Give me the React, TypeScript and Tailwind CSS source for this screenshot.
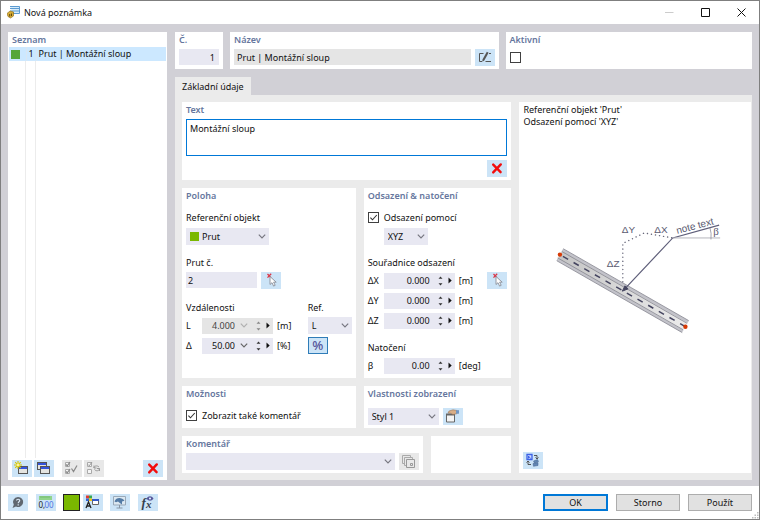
import { useState } from 'react'
import type { ReactNode } from 'react'
import clsx from 'clsx'

interface SelectProps {
  id: string
  label: string
  options: string[]
  className?: string
  swatch?: boolean
}

interface NumberFieldProps {
  id: string
  label: string
  value: string
  unit: string
  disabled?: boolean
  dropdown?: boolean
}

function Section({ title, className, children }: { title?: string; className?: string; children?: ReactNode }) {
  return (
    <section className={clsx('bg-white px-1 pb-[3px]', className)}>
      {title && <h2 className="h-[15px] leading-[15px] font-semibold text-[#65769d]">{title}</h2>}
      {children}
    </section>
  )
}

function Chevron({ className }: { className?: string }) {
  return (
    <svg viewBox="0 0 8 5" className={clsx('pointer-events-none h-[5px] w-2 shrink-0', className)} fill="none" stroke="currentColor" strokeWidth="1.2">
      <path d="M.8.7 4 3.9 7.2.7" />
    </svg>
  )
}

function Select({ id, label, options, className, swatch }: SelectProps) {
  return (
    <div className={clsx('relative flex h-[17px] items-center bg-[#e8e8f2]', className)}>
      {swatch && <span className="pointer-events-none absolute left-1 size-[9px] bg-[#7ab800]" />}
      <select
        id={id}
        aria-label={label}
        className={clsx('h-full w-full appearance-none bg-transparent pr-4 leading-[17px] outline-none', swatch ? 'pl-4' : 'pl-1')}
      >
        {options.map((o) => (
          <option key={o}>{o}</option>
        ))}
      </select>
      <Chevron className="absolute right-[3px] text-[#777780]" />
    </div>
  )
}

function Checkbox({ label, hideLabel, defaultChecked }: { label: string; hideLabel?: boolean; defaultChecked?: boolean }) {
  return (
    <label className="flex items-center gap-[5px] leading-[15px]">
      <span className="relative flex size-[11px] shrink-0">
        <input
          type="checkbox"
          aria-label={label}
          defaultChecked={defaultChecked}
          className="peer size-[11px] appearance-none border border-[#404040] bg-white"
        />
        <svg viewBox="0 0 11 11" className="pointer-events-none absolute inset-0 hidden peer-checked:block" fill="none" stroke="#333" strokeWidth="1.1">
          <path d="M2.4 5.6 4.5 7.8 8.8 3" />
        </svg>
      </span>
      {!hideLabel && label}
    </label>
  )
}

function NumberField({ id, label, value, unit, disabled, dropdown }: NumberFieldProps) {
  return (
    <div className="flex h-[17px] items-center">
      <label htmlFor={id} className="w-4 shrink-0">
        {label}
      </label>
      <div className={clsx('flex h-4 w-[71px] shrink-0 items-center', disabled ? 'bg-[#e5e5e5] text-[#444]' : 'bg-[#e8e8f2]')}>
        <input
          id={id}
          defaultValue={value}
          disabled={disabled}
          className={clsx('h-full min-w-0 flex-1 bg-transparent text-right outline-none', dropdown ? 'pr-[5px]' : 'pr-2')}
        />
        {dropdown && <Chevron className={clsx('mr-2', disabled ? 'text-[#b0b0b0]' : 'text-[#666]')} />}
        <button type="button" aria-label="▲▼" disabled={disabled} className="flex">
          <svg viewBox="0 0 5 10" className={clsx('h-[10px] w-[5px]', disabled ? 'text-[#888]' : 'text-[#333]')} fill="currentColor">
            <path d="M.5 2.800 2.500.6 4.500 2.800zM.5 7.200 2.500 9.400 4.500 7.200z" />
          </svg>
        </button>
        <button type="button" aria-label="▶" className="mr-[3px] ml-[5px] flex">
          <svg viewBox="0 0 4 7" className="h-[7px] w-1" fill="#111">
            <path d="M.5.5 3.700 3.500.5 6.500z" />
          </svg>
        </button>
      </div>
      <span className="ml-1">{unit}</span>
    </div>
  )
}

function IconButton({ label, disabled, className, children }: { label: string; disabled?: boolean; className?: string; children: ReactNode }) {
  return (
    <button
      type="button"
      aria-label={label}
      disabled={disabled}
      className={clsx('flex h-[17px] w-5 shrink-0 items-center justify-center', disabled ? 'bg-[#e8e8e8]' : 'bg-[#cce4f7]', className)}
    >
      <svg viewBox="0 0 20 17" className="h-[17px] w-5" fill="none">
        {children}
      </svg>
    </button>
  )
}

function DeleteIcon() {
  return <path d="M6.2 4.6 13.6 12.2M13.8 4.4 6.2 12.4" stroke="#f20d0d" strokeWidth="2.4" strokeLinecap="round" />
}

function WindowIcon({ x, y }: { x: number; y: number }) {
  return (
    <g>
      <rect x={x + 0.5} y={y + 0.5} width="9" height="7" fill="#e4e4e0" stroke="#555" />
      <rect x={x + 1} y={y + 1} width="8" height="2" fill="#3355dd" />
    </g>
  )
}

function PickIcon() {
  return (
    <>
      <path d="M6.500 2 10 5.600M10.200 1.800 6.500 5.600" stroke="#dc3545" strokeWidth="1.3" />
      <path d="M9 4.500v8l2-1.800 1.600 3.400 1.600-.8-1.600-3.100h2.600z" fill="#fff" stroke="#8a8f98" strokeWidth=".9" />
    </>
  )
}

function Diagram() {
  return (
    <svg viewBox="519 209 232 160" className="w-full max-w-[232px]" fill="none">
      <defs>
        <linearGradient id="beam" x1="0" x2="1">
          <stop offset="0" stopColor="#c4c4c4" />
          <stop offset="1" stopColor="#ececec" />
        </linearGradient>
      </defs>
      <path d="M562.5 249 688 321 682.5 331 557 259z" fill="url(#beam)" />
      <path d="M562.5 249 688.5 321M557.3 258.5 683 330.5" stroke="#c3c3ca" strokeWidth="2.6" />
      <path d="M563.3 247.8 689 319.8M562 250.6 687.5 322.6M557.8 257 683.5 329M556.8 259.8 682.5 331.8" stroke="#85858f" strokeWidth=".8" />
      <path d="M563 255.5 686 326" stroke="#454560" strokeWidth="1.5" strokeDasharray="6 6.3" />
      <circle cx="560" cy="253.7" r="2.2" fill="#d63a06" />
      <circle cx="685.7" cy="326" r="2.2" fill="#d63a06" />
      <path d="M623 281V242.5L644.5 232 673 237" stroke="#67677a" strokeWidth="1.4" strokeLinecap="round" strokeDasharray=".1 4" />
      <path d="M624.5 288.5 673 237 719.5 224.2" stroke="#5f5f7a" strokeWidth="1.2" />
      <path d="M622.5 290.3 625.2 285 628.2 288z" fill="#454560" stroke="#454560" />
      <path d="M673 237H720.5" stroke="#b5b5bc" />
      <path d="M710.3 227Q712 232 711.3 238.5" stroke="#8f8f9c" strokeWidth=".8" />
      <g fill="#5b5b72" fontFamily="Liberation Sans, sans-serif" fontSize="10">
        <text x="622" y="232">ΔY</text>
        <text x="654.5" y="232">ΔX</text>
        <text x="607" y="266.5">ΔZ</text>
        <text transform="translate(677.5 233) rotate(-14.500)" fontSize="10">note text</text>
        <text x="713.5" y="234.500" fontFamily="Liberation Serif, serif" fontSize="11">β</text>
      </g>
    </svg>
  )
}

export default function App() {
  const [name, setName] = useState('Prut | Montážní sloup')
  const [text, setText] = useState('Montážní sloup')

  return (
    <div className="flex min-h-screen flex-col border border-[#7f7f7f] bg-white font-['Noto_Sans','Open_Sans',sans-serif] text-[9px] leading-[15px] text-[#111]">
      <header className="flex h-[23px] items-center pl-[6px]">
        <svg viewBox="0 0 13 13" className="size-[13px]" fill="none">
          <path d="M3 .5h9.500v7H6" fill="#d7ecfb" stroke="#5c9bd1" />
          <path d="M3 2.500h9M3 5h9" stroke="#5c9bd1" strokeWidth="1.2" />
          <path d="M0 7.500 3 5l3.500 1v4L3.500 12 1 10.500z" fill="#d8ad35" stroke="#876414" strokeWidth=".6" />
          <path d="M2.700 8v2.500M4.500 7.500V10" stroke="#60480f" />
        </svg>
        <h1 className="ml-1">Nová poznámka</h1>
        <div className="ml-auto flex">
          <button type="button" aria-label="Minimize" disabled className="flex h-[22px] w-9 items-center justify-center">
            <svg viewBox="0 0 9 9" className="size-[9px]"><path d="M0 4.500h8.500" stroke="#ccc" /></svg>
          </button>
          <button type="button" aria-label="Maximize" className="flex h-[22px] w-9 items-center justify-center">
            <svg viewBox="0 0 9 9" className="size-[9px]" fill="none"><path d="M.5.500h8v8h-8z" stroke="#111" /></svg>
          </button>
          <button type="button" aria-label="Close" className="flex h-[22px] w-9 items-center justify-center">
            <svg viewBox="0 0 9 9" className="size-[9px]"><path d="M.5.500 8.500 8.500M8.500.500.500 8.500" stroke="#111" /></svg>
          </button>
        </div>
      </header>

      <main className="flex flex-1 gap-2 bg-[#d1d0d6] px-[7px] pt-2 pb-[6px]">
        <aside className="flex w-[159px] shrink-0 flex-col bg-white">
          <h2 className="h-[15px] pl-1 leading-[15px] font-semibold text-[#65769d]">Seznam</h2>
          <table className="mx-px table-fixed">
            <tbody>
              <tr className="h-[14px] bg-[#cce8ff] leading-[14px]">
                <td className="w-[17px] border-r border-[#d9e6f2] p-0 pl-[2px]">
                  <span className="block size-[9px] bg-[#55a63a]" />
                </td>
                <td className="w-[10px] border-r border-[#d9e6f2] p-0 text-center">1</td>
                <td className="p-0 pl-[2px]">Prut | Montážní sloup</td>
              </tr>
            </tbody>
          </table>
          <div className="mx-px flex flex-1">
            <div className="w-[17px] border-r border-[#ececec]" />
            <div className="w-[10px] border-r border-[#ececec]" />
          </div>
          <div className="flex items-center gap-[2px] px-1 pt-[2px] pb-[3px]">
            <IconButton label="Nová">
              <WindowIcon x={6} y={6} />
              <path d="M6 1v8M2 5h8M3.200 2.200l5.600 5.600M8.800 2.200 3.200 7.800" stroke="#d6c500" strokeWidth="1.100" />
              <circle cx="6" cy="5" r="1.400" fill="#fff59a" />
            </IconButton>
            <IconButton label="Kopírovat">
              <WindowIcon x={3} y={2} />
              <WindowIcon x={6} y={6} />
            </IconButton>
            <IconButton label="Vybrat vše" disabled className="ml-[6px]">
              <path d="M3.500 2.500h4v4h-4zM3.500 9.500h4v4h-4z" stroke="#aaa" fill="#f5f5f5" />
              <path d="m4 4.500 1.300 1.300L8 2M4 11.500l1.300 1.300L8 9M9.500 8.500l2 3L15 5.500" stroke="#888" strokeWidth="1.200" />
            </IconButton>
            <IconButton label="Obrátit výběr" disabled>
              <path d="M3.500 2.500h4v4h-4zM3.500 9.500h4v4h-4z" stroke="#aaa" fill="#f5f5f5" />
              <path d="m4 4.500 1.300 1.300L8 2M10 8c0-2 3-3 5-1M15.500 8.500c0 2.500-3.500 3-5 1M10 5.500V8h2.500M15.500 11V8.500H13" stroke="#999" />
            </IconButton>
            <IconButton label="Smazat" className="ml-auto">
              <DeleteIcon />
            </IconButton>
          </div>
        </aside>

        <div className="flex min-w-0 flex-1 flex-col">
          <div className="grid grid-cols-[48px_268fr_246fr] gap-x-[7px]">
            <Section title="Č.">
              <input aria-label="Č." defaultValue="1" className="mt-[2px] block h-4 w-full bg-[#e8e8f2] pr-1 text-right outline-none" />
            </Section>
            <Section title="Název">
              <div className="mt-[2px] flex gap-1">
                <input
                  aria-label="Název"
                  value={name}
                  onChange={(e) => setName(e.target.value)}
                  className="h-4 min-w-0 flex-1 bg-[#e5e5e5] px-[3px] outline-none"
                />
                <IconButton label="Upravit název">
                  <path d="M8.500 4.500h-4v8H7M14 4.500h2M10.500 12.500h5.500" stroke="#555" />
                  <path d="m7.500 10.500 4.300-7.700 1.800 1-4.300 7.700-2 1.200z" fill="#555" />
                </IconButton>
              </div>
            </Section>
            <Section title="Aktivní">
              <div className="mt-[5px]">
                <Checkbox label="Aktivní" hideLabel />
              </div>
            </Section>
          </div>

          <div className="mt-2 flex" role="tablist">
            <button type="button" role="tab" aria-selected="true" className="h-[18px] bg-[#ebebeb] px-[7px]">
              Základní údaje
            </button>
          </div>

          <div className="grid flex-1 grid-cols-[330fr_232fr] gap-2 bg-[#ebebeb] py-[7px] pr-px pl-[7px]">
            <div className="flex min-w-0 flex-col gap-2">
              <Section title="Text">
                <textarea
                  aria-label="Text"
                  value={text}
                  onChange={(e) => setText(e.target.value)}
                  className="mt-[2px] block h-[37px] w-full resize-none border border-[#0078d7] px-[3px] leading-[17px] outline-none"
                />
                <div className="mt-1 flex justify-end">
                  <IconButton label="Smazat text">
                    <DeleteIcon />
                  </IconButton>
                </div>
              </Section>

              <div className="grid flex-1 grid-cols-[174fr_148fr] gap-2">
                <Section title="Poloha">
                  <label htmlFor="object" className="mt-[7px] mb-[3px] block">Referenční objekt</label>
                  <Select id="object" label="Referenční objekt" options={['Prut']} swatch className="w-[83px]" />
                  <label htmlFor="member" className="mt-[10px] mb-[2px] block">Prut č.</label>
                  <div className="flex gap-1">
                    <input id="member" defaultValue="2" className="h-4 w-[71px] bg-[#e8e8f2] px-[2px] outline-none" />
                    <IconButton label="Vybrat prut"><PickIcon /></IconButton>
                  </div>
                  <div className="mt-[11px] flex justify-between">
                    <div>
                      <h3 className="mb-[2px]">Vzdálenosti</h3>
                      <div className="flex flex-col gap-[3px]">
                        <NumberField id="dist-l" label="L" value="4.000" unit="[m]" disabled dropdown />
                        <NumberField id="dist-d" label="Δ" value="50.00" unit="[%]" dropdown />
                      </div>
                    </div>
                    <div>
                      <label htmlFor="ref" className="mb-[2px] block">Ref.</label>
                      <Select id="ref" label="Ref." options={['L']} className="w-11" />
                      <button type="button" className="mt-[3px] flex h-[17px] w-5 items-center justify-center border border-[#2f7cb8] bg-[#cce4f7] text-[13px] font-medium text-[#54549a]">
                        %
                      </button>
                    </div>
                  </div>
                </Section>

                <Section title="Odsazení & natočení">
                  <div className="mt-[7px] mb-[3px]">
                    <Checkbox label="Odsazení pomocí" defaultChecked />
                  </div>
                  <Select id="offset" label="Odsazení pomocí" options={['XYZ']} className="ml-4 w-11" />
                  <h3 className="mt-[10px] mb-[2px]">Souřadnice odsazení</h3>
                  <div className="flex justify-between">
                    <div className="flex flex-col gap-[3px]">
                      <NumberField id="dx" label="ΔX" value="0.000" unit="[m]" />
                      <NumberField id="dy" label="ΔY" value="0.000" unit="[m]" />
                      <NumberField id="dz" label="ΔZ" value="0.000" unit="[m]" />
                    </div>
                    <IconButton label="Vybrat bod"><PickIcon /></IconButton>
                  </div>
                  <h3 className="mt-[11px] mb-[2px]">Natočení</h3>
                  <NumberField id="beta" label="β" value="0.00" unit="[deg]" />
                </Section>
              </div>

              <div className="grid grid-cols-[174fr_148fr] gap-2">
                <Section title="Možnosti">
                  <div className="mt-[7px]">
                    <Checkbox label="Zobrazit také komentář" defaultChecked />
                  </div>
                </Section>
                <Section title="Vlastnosti zobrazení">
                  <div className="mt-[7px] flex gap-1">
                    <Select id="style" label="Vlastnosti zobrazení" options={['Styl 1']} className="w-[71px]" />
                    <IconButton label="Upravit styl">
                      <path d="M3.500 6.500h8v7.500h-8z" fill="#f4f4f4" stroke="#666" />
                      <path d="M3 5.500h9v2H3z" fill="#666" />
                      <path d="m6 3 4-1.200 4 .7v3.200l-4 .8-2.500-1.200L5 5z" fill="#d9ae87" stroke="#8b6a50" strokeWidth=".5" />
                      <path d="M13 2.200h3v3.500h-3z" fill="#7197c5" />
                    </IconButton>
                  </div>
                </Section>
              </div>

              <div className="grid grid-cols-[241fr_81fr] gap-2">
                <Section title="Komentář">
                  <div className="mt-[2px] flex gap-1">
                    <Select id="comment" label="Komentář" options={['']} className="min-w-0 flex-1" />
                    <IconButton label="Komentáře" disabled>
                      <path d="M3.500 2.500h8v8h-8z" stroke="#aaa" />
                      <path d="M5.500 4.500h8v8h-8z" fill="#e8e8e8" stroke="#aaa" />
                      <path d="M7.500 6.500h8v8h-8z" fill="#e8e8e8" stroke="#999" />
                      <path d="M11.500 10.500h2v2h-2z" stroke="#999" />
                    </IconButton>
                  </div>
                </Section>
                <Section />
              </div>
            </div>

            <div className="flex min-w-0 flex-col bg-white pb-1">
              <div className="px-1 pt-[2px] leading-3">
                <p>Referenční objekt &apos;Prut&apos;</p>
                <p>Odsazení pomocí &apos;XYZ&apos;</p>
              </div>
              <div className="flex flex-1 items-center justify-center">
                <Diagram />
              </div>
              <IconButton label="Zobrazit" className="ml-1">
                <path d="M4 2.500h5v5H4z" fill="#cfdcff" stroke="#3c62e6" strokeWidth="1.300" />
                <path d="M5.500 6.500V4l2 2.500" stroke="#3c62e6" />
                <path d="M11 3.500h3v3M12.500 5.500l1.500 1.500 1.500-1.500M8 12.500H5v-3M3.500 10.500 5 9l1.500 1.500" stroke="#444" strokeWidth=".9" />
                <path d="m10.500 9 4-1.500 1 2-4 1.500zM10 11.500l5-1v3l-4.500.8z" fill="#6488b5" stroke="#405f88" strokeWidth=".5" />
              </IconButton>
            </div>
          </div>
        </div>
      </main>

      <footer className="relative flex items-center px-[7px] py-2">
        <IconButton label="Nápověda">
          <path d="M10 3a5 5 0 1 1-2 9.500L4.500 14l1.300-3.200A5 5 0 0 1 10 3z" fill="#5f6770" />
          <path d="M8.500 6.500c.2-1.700 3.200-1.700 3.200.1 0 1.200-1.500 1.200-1.500 2.600M10.200 10.300v1.200" stroke="#dbe9f5" strokeWidth="1.200" />
        </IconButton>
        <IconButton label="Jednotky" className="ml-2">
          <path d="M3 2h13v4H3z" fill="#91d48c" />
          <path d="M5 2v2M7 2v2M9 2v2M11 2v2M13 2v2" stroke="#62aa60" strokeWidth=".6" />
          <text x="2.500" y="14" fontSize="8" fill="#222">0,</text>
          <text x="8.500" y="14" fontSize="8" fill="#4d72e0">00</text>
        </IconButton>
        <button type="button" aria-label="Barva" className="ml-[7px] h-[17px] w-[17px] border border-[#222] bg-[#7ab800]" />
        <IconButton label="Styly" className="ml-[3px]">
          <path d="M3 1.500h3v3H3z" fill="#e33b2e" />
          <path d="M6 1.500h3v3H6z" fill="#35a853" />
          <path d="M3 4.500h3v2.500H3z" fill="#3367d6" />
          <path d="M6 4.500h3v2.500H6z" fill="#f4c20d" />
          <path d="M3 14 5.500 8 8 14M4 12h3" stroke="#222" strokeWidth="1.300" />
          <path d="M9.500 5.500h6v5h-6z" fill="#fff" stroke="#666" />
          <path d="M9 5h7v2H9z" fill="#3458c8" />
        </IconButton>
        <IconButton label="Zobrazení" className="ml-[7px]">
          <path d="M3.500 2.500h12v8.500h-12z" fill="#dce8f1" stroke="#9aa9b8" />
          <path d="M9.500 11v3M6.500 14h6" stroke="#8795a5" />
          <path d="M4.500 7.500C6 3 12 3 14.500 6.800L12 7.500v3L9.800 9 8 7.500l-2 .8z" fill="#547ba5" />
        </IconButton>
        <IconButton label="Vzorec" className="ml-2">
          <text x="3.500" y="12.500" fontFamily="Liberation Serif, serif" fontStyle="italic" fontWeight="700" fontSize="13" fill="#34404c">f</text>
          <text x="8" y="13.500" fontFamily="Liberation Serif, serif" fontStyle="italic" fontWeight="700" fontSize="11" fill="#34404c">x</text>
          <path d="M8.500 4.500c2-3 5-3 7 0-2 3-5 3-7 0z" fill="#55579b" />
          <circle cx="12" cy="4.500" r="1.100" fill="#dfe8ff" />
        </IconButton>

        <div className="ml-auto flex gap-2">
          <button type="button" className="h-[17px] w-[65px] border-2 border-[#0078d7] bg-[#e1e1e1] leading-[13px]">OK</button>
          <button type="button" className="h-[17px] w-16 border border-[#adadad] bg-[#e1e1e1] leading-[15px]">Storno</button>
          <button type="button" className="h-[17px] w-16 border border-[#adadad] bg-[#e1e1e1] leading-[15px]">Použít</button>
        </div>
        <svg viewBox="0 0 7 7" className="absolute right-0 bottom-0 size-[7px]" fill="#bbb">
          <path d="M5 0h1.500v1.500H5zM2.500 2.500H4V4H2.500zM5 2.500h1.500V4H5zM0 5h1.500v1.500H0zM2.500 5H4v1.500H2.500zM5 5h1.500v1.500H5z" />
        </svg>
      </footer>
    </div>
  )
}
